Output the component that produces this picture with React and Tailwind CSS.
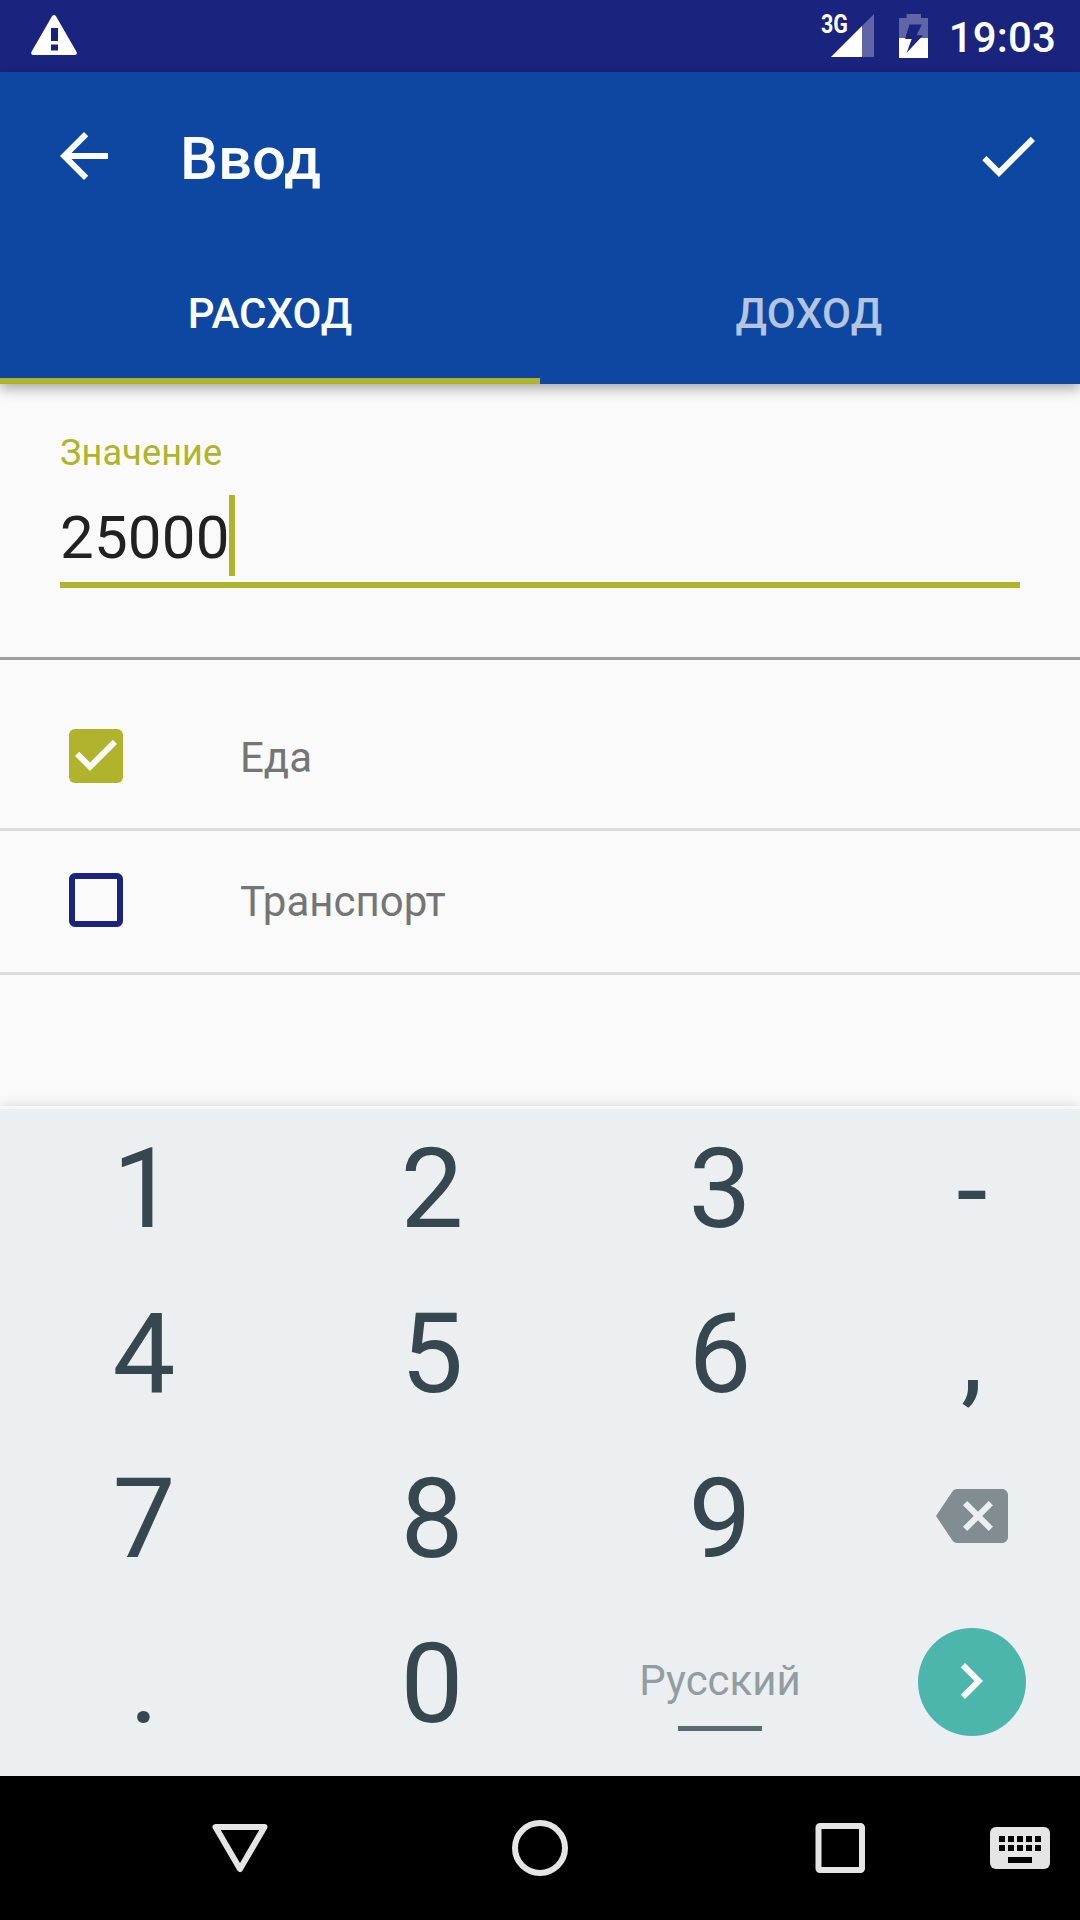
const KEYS = ["1", "2", "3", "-", "4", "5", "6", ",", "7", "8", "9", "back", ".", "0", "lang", "next"];

function Material({ d, className }) {
  return (
    <svg viewBox="0 0 24 24" className={`size-[72px] fill-current ${className || ""}`}>
      <path d={d} />
    </svg>
  );
}

function StatusBar() {
  return (
    <div className="flex h-[72px] items-start bg-[#1a237e] text-white">
      <svg viewBox="0 0 46 40" className="ml-[31px] mt-[15px] h-10 w-[46px] fill-white">
        <path fillRule="evenodd" d="M21 1.2Q23 -1 25 1.2L45.6 37Q46.4 40 44 40H2Q-.4 40 .4 37ZM20 13V26H27V13ZM20 29.500V35.500H27V29.500Z" />
      </svg>
      <div className="ml-auto flex items-start">
        <div className="relative h-[72px] w-[53px]">
          <span className="absolute left-0 top-[10px] origin-left scale-x-[0.84] text-[25.500px] font-bold leading-[29px]">3G</span>
          <svg viewBox="0 0 43 43" className="absolute left-[10px] top-[14px] size-[43px] fill-white">
            <path d="M43 0V43H0Z" opacity=".3" />
            <path d="M31 12V43H0Z" />
          </svg>
        </div>
        <svg viewBox="0 0 29 44" className="ml-[25px] mt-[14px] h-11 w-[29px] fill-white">
          <path fillRule="evenodd" opacity=".3" d="M7.500 0H22V4H29V24H21.500L24 21.300H17.700L22.700 10.500H10.500L6.300 24H0V4H7.500Z" />
          <path fillRule="evenodd" d="M0 24H6.300V25H12.700L7.700 38.700 21.500 24H29V44H0Z" />
        </svg>
        <span className="ml-[21px] mr-[24px] mt-[13px] text-[42px] font-medium leading-[50px] tracking-[0.15px]">19:03</span>
      </div>
    </div>
  );
}

function AppBar() {
  return (
    <header className="relative z-10 h-[312px] bg-[#0d47a1] text-white shadow-[0_5px_12px_rgba(0,0,0,0.32)]">
      <div className="flex h-[168px] items-center pl-12 pr-9">
        <Material d="M20 11H7.830l5.590-5.590L12 4l-8 8 8 8 1.410-1.410L7.830 13H20v-2z" />
        <h1 className="ml-[60px] mt-[5px] text-[60px] font-medium leading-[70px]">Ввод</h1>
        <Material className="ml-auto" d="M9 16.170L4.830 12l-1.420 1.410L9 19 21 7l-1.410-1.410z" />
      </div>
      <div className="grid h-36 grid-cols-2 text-center text-[42px] font-medium">
        <div className="border-b-[6px] border-[#afb42b] pt-[49px] leading-[50px]">РАСХОД</div>
        <div className="pr-[2px] pt-[49px] leading-[50px] tracking-[0.4px] text-white/70">ДОХОД</div>
      </div>
    </header>
  );
}

function CheckRow({ label, checked }) {
  return (
    <div className="flex h-36 items-center border-b-[3px] border-[#dcdcdc] pl-[69px]">
      {checked ? (
        <div className="mb-[3px] flex size-[54px] items-center justify-center rounded-[6px] bg-[#afb42b] text-[#fafafa]">
          <svg viewBox="3 3 18 18" className="size-[54px] fill-current">
            <path d="M10 17l-5-5 1.410-1.410L10 14.170l7.590-7.590L19 8z" />
          </svg>
        </div>
      ) : (
        <div className="mb-[3px] size-[54px] rounded-[6px] border-[6px] border-[#1a237e]" />
      )}
      <span className="ml-[117px] text-[42px] leading-[50px] text-[#757575]">{label}</span>
    </div>
  );
}

function Key({ name }) {
  if (name === "back") {
    return (
      <div className="flex justify-center pt-[41px] text-[#828d91]">
        <Material d="M22 3H7c-.690 0-1.230.350-1.590.880L0 12l5.410 8.110c.360.530.900.890 1.590.890h15c1.100 0 2-.900 2-2V5c0-1.100-.900-2-2-2zm-3 12.590L17.590 17 14 13.410 10.410 17 9 15.590 12.590 12 9 8.410 10.410 7 14 10.590 17.590 7 19 8.410 15.410 12 19 15.590z" />
      </div>
    );
  }
  if (name === "lang") {
    return (
      <div className="flex flex-col items-center pt-[52px] text-[42px] leading-[50px] text-[#929da1]">
        Русский
        <div className="mt-[20px] h-[5px] w-[84px] bg-[#5d6b71]" />
      </div>
    );
  }
  if (name === "next") {
    return (
      <div className="flex justify-center pt-[24px]">
        <div className="flex size-[108px] items-center justify-center rounded-full bg-[#4db6ac] text-white">
          <Material className="-mt-[2px] mr-[2px]" d="M10 6L8.590 7.410 13.170 12l-4.580 4.590L10 18l6-6z" />
        </div>
      </div>
    );
  }
  if (name === "-") {
    return <div className="pt-[16px] text-center text-[112px] leading-[132px]">-</div>;
  }
  return <div className="pt-[14px] text-center text-[112px] leading-[132px]">{name}</div>;
}

function Keyboard() {
  return (
    <div className="relative h-[670px] border-t-[3px] border-[#f5f7f9] bg-[#ebeff2] text-[#37474f] shadow-[0_-2px_10px_rgba(0,0,0,0.12)]">
      <div className="grid grid-cols-[288px_288px_288px_216px] auto-rows-[165px]">
        {KEYS.map((k) => (
          <Key key={k} name={k} />
        ))}
      </div>
    </div>
  );
}

function NavBar() {
  return (
    <nav className="flex h-36 items-center bg-black">
      <svg viewBox="0 0 72 72" className="ml-[204px] size-[72px] fill-none stroke-[#e5e5e5] stroke-[6px]">
        <path strokeLinejoin="round" d="M11.500 15H60.500L36 57Z" />
      </svg>
      <svg viewBox="0 0 72 72" className="ml-[228px] size-[72px] fill-none stroke-[#e5e5e5] stroke-[6px]">
        <circle cx="36" cy="36" r="25" />
      </svg>
      <svg viewBox="0 0 72 72" className="ml-[228px] size-[72px] fill-none stroke-[#e5e5e5] stroke-[6px]">
        <rect x="14.500" y="14" width="43.500" height="44" rx="1.500" />
      </svg>
      <svg viewBox="0 0 60 42" className="ml-[114px] h-[42px] w-[60px]">
        <rect width="60" height="42" rx="6" fill="#e5e5e5" />
        {[9, 18].map((y) => [9, 18, 27, 36, 45].map((x) => <rect key={`${x}-${y}`} x={x} y={y} width="6" height="6" />))}
        <rect x="18" y="30" width="24" height="6" />
      </svg>
    </nav>
  );
}

export default function App() {
  return (
    <div className="flex h-[1920px] w-[1080px] flex-col overflow-hidden bg-[#fafafa] font-['Roboto',sans-serif]">
      <StatusBar />
      <AppBar />
      <main className="flex-1">
        <div className="h-[276px] border-b-[3px] border-[#9e9e9e] px-[60px] pt-[48px]">
          <div className="text-[36px] leading-[42px] tracking-[0.15px] text-[#afb42b]">Значение</div>
          <div className="mt-[21px] flex h-[93px] items-start border-b-[6px] border-[#afb42b] text-[60px] text-[#212121]">
            <span className="mt-[8px] leading-[70px] tracking-[0.2px]">25000</span>
            <span className="-ml-px h-[81px] w-[6px] bg-[#afb42b]" />
          </div>
        </div>
        <div className="pt-[27px]">
          <CheckRow label="Еда" checked />
          <CheckRow label="Транспорт" />
        </div>
      </main>
      <Keyboard />
      <NavBar />
    </div>
  );
}
